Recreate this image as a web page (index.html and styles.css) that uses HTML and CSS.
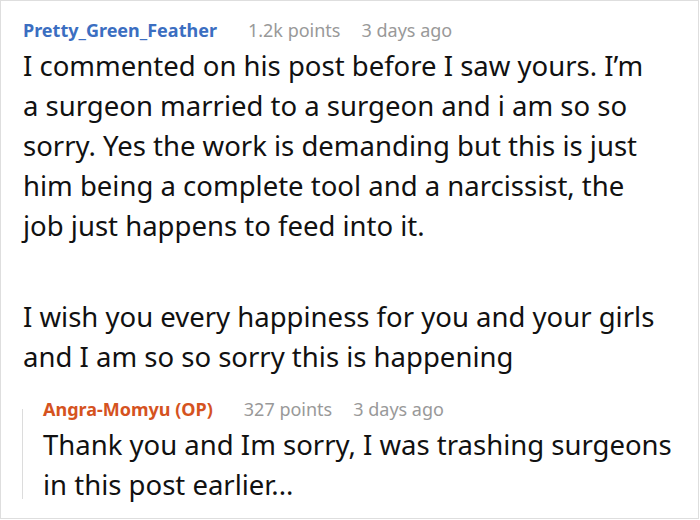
FILE: index.html
```html
<!DOCTYPE html>
<html lang="en">
<head>
<meta charset="utf-8">
<title>Comment</title>
<link rel="stylesheet" href="styles.css">
</head>
<body>
<div class="frame">
  <div class="comment">
    <div class="meta">
      <span class="author">Pretty_Green_Feather</span>
      <span class="points">1.2k points</span>
      <span class="time">3 days ago</span>
    </div>
    <div class="body main">
      <p>I commented on his post before I saw yours. I’m a surgeon married to a surgeon and i am so so sorry. Yes the work is demanding but this is just him being a complete tool and a narcissist, the job just happens to feed into it.</p>
      <p>I wish you every happiness for you and your girls and I am so so sorry this is happening</p>
    </div>
    <div class="reply">
      <div class="meta">
        <span class="author op">Angra-Momyu (OP)</span>
        <span class="points">327 points</span>
        <span class="time">3 days ago</span>
      </div>
      <div class="body">
        <p>Thank you and Im sorry, I was trashing surgeons in this post earlier...</p>
      </div>
    </div>
  </div>
</div>
</body>
</html>
```
FILE: styles.css
```css
* { box-sizing: border-box; }
html, body { margin: 0; padding: 0; background: #fff; }
body { font-family: "Noto Sans", "Open Sans", sans-serif; color: #111; }
.frame {
  width: 699px;
  height: 519px;
  border: 1px solid #dedede;
  overflow: hidden;
}
.comment { padding: 15px 0 0 22px; }
.meta {
  display: flex;
  font-size: 18px;
  line-height: 28px;
  color: #999;
  white-space: nowrap;
}
.author { font-weight: 700; color: #3b6ec1; margin-right: 31px; }
.author.op { color: #d5531f; }
.points { margin-right: 21px; }
.body { margin-top: 2px; font-size: 27.5px; line-height: 40px; }
.body.main { padding-right: 38px; }
.body p { margin: 0; }
.body p + p { margin-top: 51px; }
.reply {
  position: relative;
  margin-top: 18px;
  margin-left: -1px;
  padding-left: 21px;
}
.reply::before {
  content: "";
  position: absolute;
  left: 0;
  top: 14px;
  bottom: 6px;
  width: 1px;
  background: #dcdcdc;
}
.reply .body { margin-top: 2px; }
```
